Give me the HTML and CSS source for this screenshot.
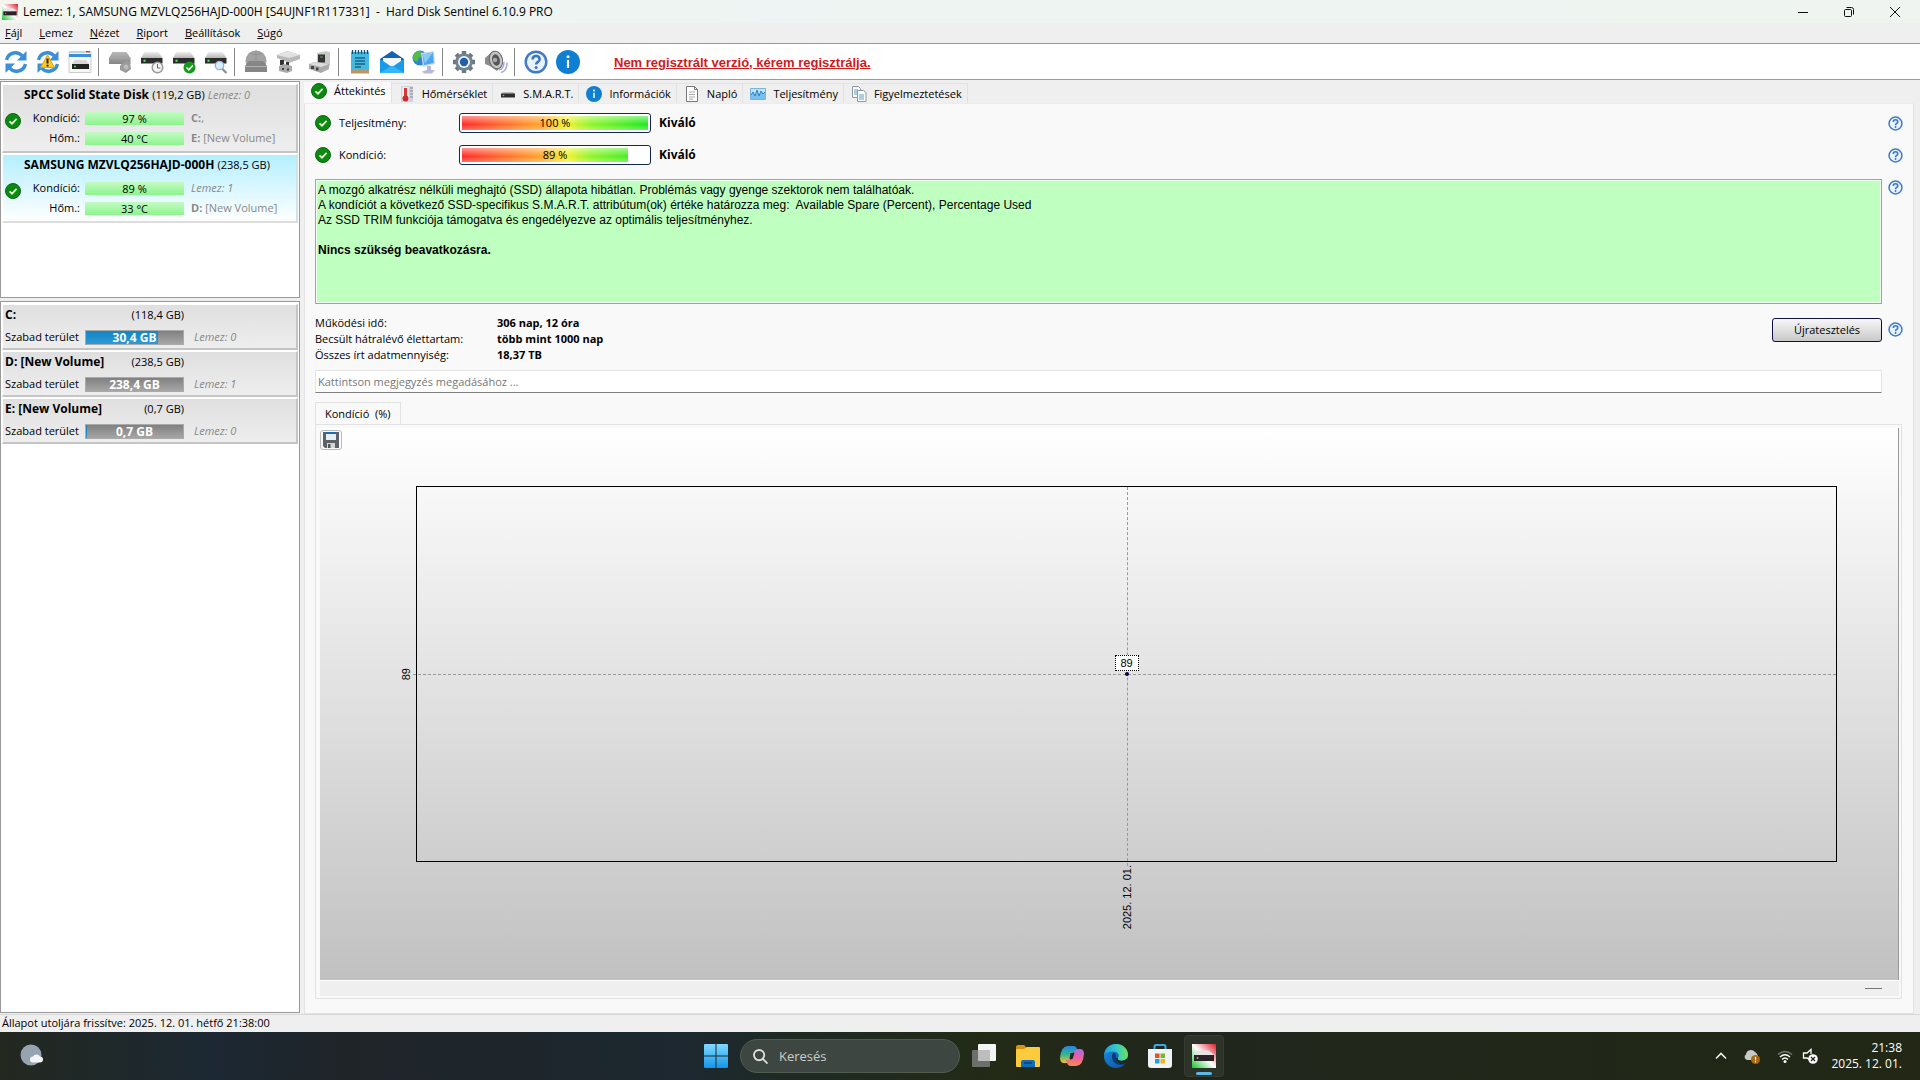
FILE: index.html
```html
<!DOCTYPE html>
<html lang="hu">
<head>
    <meta charset="UTF-8">
    <meta name="viewport" content="width=device-width, initial-scale=1.0">
    <title>Hard Disk Sentinel</title>
    <link rel="stylesheet" href="styles.css">
</head>
<body>
    <!-- shared icons -->
    <svg class="sprite" width="0" height="0" aria-hidden="true">
        <defs>
            <linearGradient id="disk-top" x1="0" y1="0" x2="0" y2="1"><stop offset="0" stop-color="#eee"/><stop offset="1" stop-color="#b5b5b5"/></linearGradient>
            <linearGradient id="blue" x1="0" y1="0" x2="0" y2="1"><stop offset="0" stop-color="#7fd9ff"/><stop offset="1" stop-color="#1296ea"/></linearGradient>
            <linearGradient id="app-bg" x1="0" y1="1" x2="1" y2="0"><stop offset="0" stop-color="#19c32f"/><stop offset=".5" stop-color="#fff"/><stop offset="1" stop-color="#e01a2a"/></linearGradient>
            <linearGradient id="grey-disk" x1="0" y1="0" x2="0" y2="1"><stop offset="0" stop-color="#b9b9b9"/><stop offset="1" stop-color="#858585"/></linearGradient>
            <linearGradient id="edge-a" x1="0" y1="0" x2="1" y2="0"><stop offset="0" stop-color="#1e9fe0"/><stop offset=".5" stop-color="#35c6c8"/><stop offset="1" stop-color="#6be25a"/></linearGradient>
            <linearGradient id="edge-b" x1="0" y1="0" x2="1" y2="1"><stop offset="0" stop-color="#1c8fe0"/><stop offset="1" stop-color="#0c4d9c"/></linearGradient>
            <linearGradient id="cop-a" x1="0" y1="0" x2="0" y2="1"><stop offset="0" stop-color="#2583e8"/><stop offset=".5" stop-color="#37b58c"/><stop offset="1" stop-color="#f3c12e"/></linearGradient>
            <linearGradient id="cop-b" x1="0" y1="0" x2="0" y2="1"><stop offset="0" stop-color="#a86bea"/><stop offset=".5" stop-color="#ea5fa2"/><stop offset="1" stop-color="#fb8a4e"/></linearGradient>
        </defs>
        <symbol id="i-ok" viewBox="0 0 16 16">
            <circle cx="8" cy="8" r="7.5" fill="#0c8a10" stroke="#076a0a"/>
            <path d="M4.5 8.3 7 10.7l4.6-4.8" fill="none" stroke="#e6f7d8" stroke-width="1.7"/>
        </symbol>
        <symbol id="i-help" viewBox="0 0 24 24">
            <circle cx="12" cy="12" r="10.3" fill="#e9f3ff" stroke="#3f7bca" stroke-width="2.4"/>
            <path d="M8.6 9.4c0-4.4 7-4.4 7 0 0 2.6-3.5 2.4-3.5 5.2" fill="none" stroke="#3b74c4" stroke-width="2.5"/>
            <circle cx="12.1" cy="17.6" r="1.5" fill="#3b74c4"/>
        </symbol>
        <symbol id="i-info" viewBox="0 0 24 24">
            <circle cx="12" cy="12" r="12" fill="#0f7fd2"/>
            <path d="M12 10v8" stroke="#fff" stroke-width="2.2"/>
            <circle cx="12" cy="6.7" r="1.5" fill="#fff"/>
        </symbol>
        <symbol id="i-refresh" viewBox="0 0 24 24">
            <path d="M2.500 10C4.500 1.800 14 .8 18.300 6" fill="none" stroke="#3b8fd8" stroke-width="3.400"/>
            <path d="M22.500 1v9.500h-9.500z" fill="#3b8fd8"/>
            <path d="M21.500 14c-2 8.200-11.500 9.200-15.800 4" fill="none" stroke="#3b8fd8" stroke-width="3.400"/>
            <path d="M1.500 23v-9.500H11z" fill="#3b8fd8"/>
        </symbol>
        <symbol id="i-disk" viewBox="0 0 24 24">
            <path d="M4.500 2h14L22.500 8H1z" fill="url(#disk-top)"/>
            <path d="M1 8h21.500v5.500H1z" fill="#2c2c2c"/>
            <circle cx="4.500" cy="10.700" r="1.200" fill="#43e04b"/>
        </symbol>
        <symbol id="i-app" viewBox="0 0 24 24">
            <path d="M0 0h24v24H0z" fill="url(#app-bg)"/>
            <path d="M5.500 6.500h11l5.500 4.500H2z" fill="#e4e4e4"/>
            <path d="M2 11h20v6H2z" fill="#2b2126"/>
            <circle cx="5.500" cy="14" r=".9" fill="#58df5a"/>
        </symbol>
    </svg>

    <div class="desktop">
        <header class="titlebar">
            <svg class="title-icon"><use href="#i-app"/></svg>
            <h1 class="title">Lemez: 1, SAMSUNG MZVLQ256HAJD-000H [S4UJNF1R117331] &nbsp;-&nbsp; Hard Disk Sentinel 6.10.9 PRO</h1>
            <button class="win-btn" aria-label="Kis méret"><svg viewBox="0 0 12 12"><path d="M1 6.500h10"/></svg></button>
            <button class="win-btn" aria-label="Előző méret"><svg viewBox="0 0 12 12"><rect x="1.500" y="3.500" width="7" height="7" rx="1"/><path d="M3.500 1.500h5q2 0 2 2v5"/></svg></button>
            <button class="win-btn" aria-label="Bezárás"><svg viewBox="0 0 12 12"><path d="m1 1 10 10M11 1 1 11"/></svg></button>
        </header>

        <nav class="menu">
            <button><u>F</u>ájl</button>
            <button><u>L</u>emez</button>
            <button><u>N</u>ézet</button>
            <button><u>R</u>iport</button>
            <button><u>B</u>eállítások</button>
            <button><u>S</u>úgó</button>
        </nav>

        <div class="toolbar">
            <button class="tool" aria-label="Frissítés"><svg><use href="#i-refresh"/></svg></button>
            <button class="tool" aria-label="Teljes frissítés">
                <svg viewBox="0 0 24 24"><use href="#i-refresh"/><path d="m11.500 5 7 12.500h-14z" fill="#ffc927" stroke="#e5a400" stroke-linejoin="round"/><path d="M11.500 8.500v5M11.500 14.700v1.800" stroke="#222" stroke-width="2"/></svg>
            </button>
            <button class="tool" aria-label="Ablak">
                <svg viewBox="0 0 24 24"><path d="M1 1.500h22v21H1z" fill="#f6f6f6" stroke="#ccc"/><path d="M1 1h17v2H1z" fill="#bcd6ee"/><path d="M18 1h4v1.500h-4z" fill="#d3412b"/><path d="M1 4h22v3H1z" fill="#3b8fd8"/><path d="M7 10h11l3 4H4z" fill="#d8d8d8"/><path d="M4 14h17v5H4z" fill="#222"/><circle cx="7" cy="16.500" r="1" fill="#4ee055"/></svg>
            </button>
            <span class="sep"></span>
            <button class="tool" aria-label="Leállítás" disabled>
                <svg viewBox="0 0 24 24"><path d="M4.500 2h14L22.500 8v6H1V8z" fill="url(#grey-disk)"/><path d="M1 8h21.500" stroke="#a8a8a8"/><path d="M12 16c3-4 6-6 10-4l1 7-5 4-6-3z" fill="#9b9b9b"/><circle cx="18" cy="17" r="2.500" fill="#bbb"/></svg>
            </button>
            <button class="tool" aria-label="Ütemezés">
                <svg viewBox="0 0 24 24"><use href="#i-disk"/><circle cx="17.500" cy="17.500" r="5.300" fill="#f4f4f4" stroke="#9a9a9a" stroke-width="1.500"/><path d="M17.500 14v4h3" fill="none" stroke="#666"/></svg>
            </button>
            <button class="tool" aria-label="Teszt">
                <svg viewBox="0 0 24 24"><use href="#i-disk"/><circle cx="17.500" cy="17.500" r="6" fill="#159a1b"/><path d="m14.500 17.500 2.300 2.300 4-4.300" fill="none" stroke="#fff" stroke-width="1.600"/></svg>
            </button>
            <button class="tool" aria-label="Keresés a lemezen">
                <svg viewBox="0 0 24 24"><use href="#i-disk"/><path d="m18 18.500 4.500 4.500" stroke="#8c8c94" stroke-width="2.200"/><circle cx="15.500" cy="15.500" r="4.200" fill="#d8efff" stroke="#9bb0c4" stroke-width="1.300"/></svg>
            </button>
            <span class="sep"></span>
            <button class="tool" aria-label="Hálózat" disabled>
                <svg viewBox="0 0 24 24"><circle cx="12" cy="11" r="10.500" fill="#a2a2a2"/><path d="M12 .5v10M6 3c4 2 8 2 12 0" stroke="#909090" fill="none"/><path d="M5 11h14l4 5v6H1v-6z" fill="#868686"/><path d="M1 16.500h22" stroke="#b2b2b2"/></svg>
            </button>
            <button class="tool" aria-label="Csatlakozó">
                <svg viewBox="0 0 24 24"><path d="m1 5 10-4 13 4v4L13 13 1 8z" fill="#b9b9b9"/><path d="m1 5 10-4 13 4-11 3z" fill="#e2e2e2"/><path d="M4 10h4v5H4zM10 12h3v4h-3z" fill="#333"/><path d="m3 16 5-2 8 2v5l-5 2-8-2z" fill="#aaa"/><path d="M6 18h2v2H6zM11 18.500h2v2h-2z" fill="#444"/></svg>
            </button>
            <button class="tool" aria-label="Adatkábel">
                <svg viewBox="0 0 24 24"><path d="m9 3 9-2 4 1v14l-9 2-4-3z" fill="#c9c9c9"/><path d="M10 4.500h7v8h-7z" fill="#333"/><path d="m1 14 5-2 15 2v5l-8 4-12-4z" fill="#aaa"/><path d="m1 14 5-2 15 2-8 3z" fill="#dcdcdc"/><path d="M3 16h3v3H3zM8 17.500h2.500v3H8z" fill="#444"/><path d="M12 7h3" stroke="#57a851"/></svg>
            </button>
            <span class="sep"></span>
            <button class="tool" aria-label="Riport">
                <svg viewBox="0 0 24 24"><path d="M3 2h18v19H3z" fill="#45b9e0"/><path d="M3 20h18v3.500H3z" fill="#b99767"/><path d="M4.500 0v4M7.500 0v4M10.500 0v4M13.500 0v4M16.500 0v4M19.500 0v4" stroke="#174c70" stroke-width="1.300"/><path d="M7 8h10M7 11h10M7 14h10M7 17h6" stroke="#176387" stroke-width="1.400"/></svg>
            </button>
            <button class="tool" aria-label="E-mail">
                <svg viewBox="0 0 24 24"><path d="M0 9 12 1l12 8v14H0z" fill="#1463b4"/><path d="M3 8h18v9H3z" fill="#f2f7fc"/><path d="m0 9 12 8L24 9v14H0z" fill="#179be8"/><path d="m0 23 12-7.500L24 23z" fill="#38b5f4"/></svg>
            </button>
            <button class="tool" aria-label="Távoli elérés">
                <svg viewBox="0 0 24 24"><circle cx="8" cy="8" r="7.500" fill="#2f85d4"/><path d="M3 3c5-4 8-1 7 2s-4 2-4 5-4 1-5-1 0-4 2-6z" fill="#54bb49"/><path d="m9 3 13-2 1 13-12 3z" fill="#cfd5f0"/><path d="m10.500 4.500 10.500-2 .7 10.500-9.700 2z" fill="#4aa6ee"/><path d="m10.500 4.500 10.500-2-8 11z" fill="#86cbf8"/><path d="M15 16h4v4h4l-3 3.500h-8l-2-2 5-1.500z" fill="#b7b9d6"/></svg>
            </button>
            <span class="sep"></span>
            <button class="tool" aria-label="Beállítások">
                <svg viewBox="0 0 24 24"><path d="M12 1v22M1 12h22M4.200 4.200l15.600 15.600M19.800 4.200 4.200 19.800" stroke="#6b7885" stroke-width="4.400"/><circle cx="12" cy="12" r="8.800" fill="#74818e"/><circle cx="12" cy="12" r="6" fill="#f2f6fa"/><circle cx="12" cy="12" r="4.200" fill="#1f5fae"/></svg>
            </button>
            <button class="tool" aria-label="Hang">
                <svg viewBox="0 0 24 24"><path d="m1 8 8-7 6 1 2 14-4 5-7-5-5-2z" fill="#8c8c8c"/><ellipse cx="12" cy="10" rx="6.500" ry="9" transform="rotate(-15 12 10)" fill="#c4c4c4" stroke="#666"/><ellipse cx="12" cy="10" rx="3.800" ry="5.800" transform="rotate(-15 12 10)" fill="#555"/><circle cx="11" cy="10" r="2.300" fill="#aaa"/><path d="M15 20c4-1 5-4 5-8M17 22.500c4-1 6-5 6-10" fill="none" stroke="#a9a9dc" stroke-width="1.500"/></svg>
            </button>
            <span class="sep"></span>
            <button class="tool" aria-label="Súgó"><svg><use href="#i-help"/></svg></button>
            <button class="tool" aria-label="Névjegy"><svg><use href="#i-info"/></svg></button>
            <a class="register" href="#">Nem regisztrált verzió, kérem regisztrálja.</a>
        </div>

        <div class="workspace">
            <aside class="sidebar">
                <div class="panel disks">
                    <article class="disk">
                        <h2 class="disk-name">SPCC Solid State Disk <span>(119,2 GB)</span> <em>Lemez: 0</em></h2>
                        <svg class="ok"><use href="#i-ok"/></svg>
                        <span class="disk-label">Kondíció:</span>
                        <span class="meter">97 %</span>
                        <span class="drive"><b>C:</b>,</span>
                        <span class="disk-label">Hőm.:</span>
                        <span class="meter">40 °C</span>
                        <span class="drive"><b>E:</b> [New Volume]</span>
                    </article>
                    <article class="disk selected">
                        <h2 class="disk-name">SAMSUNG MZVLQ256HAJD-000H <span>(238,5 GB)</span></h2>
                        <svg class="ok"><use href="#i-ok"/></svg>
                        <span class="disk-label">Kondíció:</span>
                        <span class="meter">89 %</span>
                        <span class="drive"><em>Lemez: 1</em></span>
                        <span class="disk-label">Hőm.:</span>
                        <span class="meter">33 °C</span>
                        <span class="drive"><b>D:</b> [New Volume]</span>
                    </article>
                </div>
                <div class="panel volumes">
                    <article class="volume">
                        <h3>C:</h3><span class="size">(118,4 GB)</span>
                        <span class="free">Szabad terület</span>
                        <span class="space"><i style="width: 74%"></i><b>30,4 GB</b></span>
                        <em>Lemez: 0</em>
                    </article>
                    <article class="volume">
                        <h3>D: [New Volume]</h3><span class="size">(238,5 GB)</span>
                        <span class="free">Szabad terület</span>
                        <span class="space"><i style="width: 0%"></i><b>238,4 GB</b></span>
                        <em>Lemez: 1</em>
                    </article>
                    <article class="volume">
                        <h3>E: [New Volume]</h3><span class="size">(0,7 GB)</span>
                        <span class="free">Szabad terület</span>
                        <span class="space"><i style="width: 1%"></i><b>0,7 GB</b></span>
                        <em>Lemez: 0</em>
                    </article>
                </div>
            </aside>

            <main class="main">
                <div class="tabs">
                    <button class="tab active"><svg><use href="#i-ok"/></svg>Áttekintés</button>
                    <button class="tab"><svg viewBox="0 0 16 16"><path d="M2 0h12v16H2z" fill="#cdd2dc"/><path d="M3 1h7v14H3z" fill="#e9ebf0"/><path d="M11 2h3M11 5h3M11 8h3M11 11h3" stroke="#889"/><path d="M6.500 2v9" stroke="#d43a35" stroke-width="3"/><circle cx="6.500" cy="12.500" r="3" fill="#c92c2c"/></svg>Hőmérséklet</button>
                    <button class="tab"><svg viewBox="0 0 16 16"><path d="M3 6h10l2 2H1z" fill="#bbb"/><path d="M1 7.500h14v4H1z" fill="#2e2e2e"/><circle cx="3.500" cy="9.500" r=".8" fill="#54d75a"/></svg>S.M.A.R.T.</button>
                    <button class="tab"><svg><use href="#i-info"/></svg>Információk</button>
                    <button class="tab"><svg viewBox="0 0 16 16"><path d="M2.500.5h8l3 3v12h-11z" fill="#fff" stroke="#777"/><path d="M10.500.5v3h3" fill="none" stroke="#777"/><path d="M5 6h6M5 8.500h6M5 11h6M5 13.200h4" fill="none" stroke="#aaa"/></svg>Napló</button>
                    <button class="tab"><svg viewBox="0 0 16 16"><path d="M.5 2.500h15v11H.5z" fill="#c2e3fa" stroke="#79b4dc"/><path d="m1 9 2-3 2 4 2-6 2 6 2-5 2 3 2-2v7H1z" fill="#79c0f0"/><path d="m1 9 2-3 2 4 2-6 2 6 2-5 2 3 2-2" fill="none" stroke="#2a83c9"/></svg>Teljesítmény</button>
                    <button class="tab"><svg viewBox="0 0 16 16"><path d="M1.500.5h6l2 2v9h-8z" fill="#fff" stroke="#8a98a5"/><path d="M3 4h4M3 6h4M3 8h3" stroke="#5a9bc9"/><path d="M6.500 4.500h6l2.500 2v9H6.500z" fill="#fff" stroke="#8a98a5"/><path d="M8 9h5M8 11h5M8 13h5" stroke="#5a9bc9"/></svg>Figyelmeztetések</button>
                </div>

                <div class="page">
                    <div class="overview">
                        <div class="status">
                            <svg class="ok"><use href="#i-ok"/></svg>
                            <span class="status-label">Teljesítmény:</span>
                            <span class="gauge"><i style="width: 100%"></i><span>100 %</span></span>
                            <b>Kiváló</b>
                        </div>
                        <button class="help" aria-label="Súgó: teljesítmény"><svg><use href="#i-help"/></svg></button>
                        <div class="status">
                            <svg class="ok"><use href="#i-ok"/></svg>
                            <span class="status-label">Kondíció:</span>
                            <span class="gauge"><i style="width: 89%"></i><span>89 %</span></span>
                            <b>Kiváló</b>
                        </div>
                        <button class="help" aria-label="Súgó: kondíció"><svg><use href="#i-help"/></svg></button>
                        <div class="report">
                            <p>A mozgó alkatrész nélküli meghajtó (SSD) állapota hibátlan. Problémás vagy gyenge szektorok nem találhatóak.<br>
                            A kondíciót a következő SSD-specifikus S.M.A.R.T. attribútum(ok) értéke határozza meg:&nbsp; Available Spare (Percent), Percentage Used<br>
                            Az SSD TRIM funkciója támogatva és engedélyezve az optimális teljesítményhez.</p>
                            <p><b>Nincs szükség beavatkozásra.</b></p>
                        </div>
                        <button class="help" aria-label="Súgó: állapot"><svg><use href="#i-help"/></svg></button>
                        <div class="facts">
                            <dl>
                                <dt>Működési idő:</dt><dd>306 nap, 12 óra</dd>
                                <dt>Becsült hátralévő élettartam:</dt><dd>több mint 1000 nap</dd>
                                <dt>Összes írt adatmennyiség:</dt><dd>18,37 TB</dd>
                            </dl>
                            <button class="retest">Újratesztelés</button>
                        </div>
                        <button class="help retest-help" aria-label="Súgó: újratesztelés"><svg><use href="#i-help"/></svg></button>
                        <input class="comment" type="text" aria-label="Megjegyzés" placeholder="Kattintson megjegyzés megadásához ...">
                    </div>

                    <div class="history">
                        <button class="history-tab">Kondíció &nbsp;(%)</button>
                        <div class="history-page">
                            <div class="chart">
                                <button class="save" aria-label="Mentés"><svg viewBox="0 0 16 16"><path d="M0 0h16v16H2l-2-2z" fill="#5c6268"/><path d="M3 0h10v8H3z" fill="#e9eef2"/><path d="M3 0h10v2H3z" fill="#1b6fb5"/><path d="M4 11h8v5H4z" fill="#d6d6d6"/><path d="M5 12h2.500v4H5z" fill="#555"/></svg></button>
                                <div class="plot">
                                    <span class="line-v"></span>
                                    <span class="line-h"></span>
                                    <span class="point"></span>
                                    <span class="value">89</span>
                                    <span class="axis-y">89</span>
                                    <span class="axis-x">2025. 12. 01.</span>
                                </div>
                            </div>
                            <div class="chart-foot"><span></span></div>
                        </div>
                    </div>
                </div>
            </main>
        </div>

        <footer class="statusbar">Állapot utoljára frissítve: 2025. 12. 01. hétfő 21:38:00</footer>

        <div class="taskbar">
            <button class="weather" aria-label="Időjárás">
                <svg viewBox="0 0 24 24"><circle cx="11" cy="11" r="10.500" fill="#98a3b1"/><path d="M13 18.500a3 3 0 0 1 0-6 4 4 0 0 1 7 0 3 3 0 0 1 0 6z" fill="#f3f5f8"/></svg>
            </button>
            <div class="apps">
                <button class="app" aria-label="Start"><svg viewBox="0 0 24 24"><path d="M1 0h10.500v11.500H0V1q0-1 1-1zM12.500 0H23q1 0 1 1v10.500H12.500zM0 12.500h11.500V24H1q-1 0-1-1zM12.500 12.500H24V23q0 1-1 1H12.500z" fill="url(#blue)"/></svg></button>
                <label class="search">
                    <svg viewBox="0 0 16 16"><circle cx="6.500" cy="6.500" r="5.500"/><path d="m10.500 10.500 5 5"/></svg>
                    <input type="search" placeholder="Keresés" aria-label="Keresés">
                </label>
                <button class="app" aria-label="Feladatnézet"><svg viewBox="0 0 24 24"><rect x="6" y="0" width="18" height="17" rx="1" fill="#f4f4f4"/><rect x="0" y="6" width="18" height="17" rx="1" fill="#6d6f6b"/><path d="M6 6h12v11H6z" fill="#bdbdbd"/></svg></button>
                <button class="app" aria-label="Fájlkezelő"><svg viewBox="0 0 24 24"><path d="M0 3q0-2 2-2h6l3 3h12v6H0z" fill="#d6930f"/><path d="M1 5h7l3-2h12q1 0 1 1v18q0 1-1 1H1q-1 0-1-1V6z" fill="#fccb3d"/><path d="M5 23v-5q0-2 2-2h10q2 0 2 2v5z" fill="#0f6cbd"/><path d="M8 19h8" stroke="#0a4b86" stroke-width="2"/></svg></button>
                <button class="app" aria-label="Copilot"><svg viewBox="0 0 24 24"><path d="M8 2h6q2 0 3 3l1 3h-3q-3 0-4 4l-1 4q-1 3-4 3H4q-4 0-4-5Q1 2 8 2z" fill="url(#cop-a)"/><path d="M16 22h-6q-2 0-3-3l-1-3h3q3 0 4-4l1-4q1-3 4-3h2q4 0 4 5-1 12-8 12z" fill="url(#cop-b)"/><path d="m10.500 9h4l-2 6h-3z" fill="#20281a"/></svg></button>
                <button class="app" aria-label="Edge"><svg viewBox="0 0 24 24"><circle cx="12" cy="12" r="12" fill="url(#edge-b)"/><path d="M.2 10.500C1 4 6 0 12 0c7 0 12 5 12 10.500 0 4-3 6-6.500 6-3 0-4.300-1.300-3.500-2.500 2-3 0-6.500-4.500-6.500C5 7.500 1 9 .2 10.500z" fill="url(#edge-a)"/><path d="M9.500 8.500C6 12 8 21 17 21q3 0 5-1.800c-5 1-11-1.200-9.800-6.200q.4-3-2.700-4.500z" fill="#093c7c"/><path d="M14 14c-1.500 3 5 4.500 9.500.5L24 18l-3 1.500c-5 1.500-9.500-1.500-8.800-5.500z" fill="#1f2818"/></svg></button>
                <button class="app" aria-label="Store"><svg viewBox="0 0 24 24"><path d="M6.500 6V2.500q0-1.500 1.500-1.500h8q1.500 0 1.500 1.500V6" fill="none" stroke="#38a9e4" stroke-width="2"/><path d="M0 5h24v16q0 3-3 3H3q-3 0-3-3z" fill="#f1f2f3"/><path d="M7 9.500h4.500V14H7z" fill="#e2512d"/><path d="M12.500 9.500H17V14h-4.500z" fill="#7cb728"/><path d="M7 15h4.500v4.500H7z" fill="#199fe2"/><path d="M12.500 15H17v4.500h-4.500z" fill="#f5b717"/></svg></button>
                <button class="app running" aria-label="Hard Disk Sentinel"><svg><use href="#i-app"/></svg></button>
            </div>
            <div class="tray">
                <svg class="chevron" viewBox="0 0 16 16"><path d="m3 10.500 5-5 5 5" fill="none" stroke="#eee" stroke-width="1.600"/></svg>
                <svg class="cloud" viewBox="0 0 16 16"><path d="M3 12a3 3 0 0 1-1-5.500A5 5 0 0 1 11 4q2 1 3 4v4z" fill="#c9c9c6"/><circle cx="11.500" cy="11.500" r="4.500" fill="#a9690f"/><path d="M11.500 8.800v3.500M11.500 13v1.200" stroke="#fff" stroke-width="1.200"/></svg>
                <svg class="wifi" viewBox="0 0 16 16"><path d="M1 6.500q7-6 14 0" stroke="#777" fill="none" stroke-width="1.400"/><path d="M3 9q5-4.500 10 0M5 11.500q3-3 6 0" stroke="#fff" fill="none" stroke-width="1.500"/><circle cx="8" cy="13.500" r="1.500" fill="#fff"/></svg>
                <svg class="sound" viewBox="0 0 16 16"><path d="M8 12 5 10H1.500V5H5l4-3.500V6" fill="none" stroke="#fff" stroke-width="1.300"/><circle cx="11" cy="11" r="4.800" fill="#fff"/><path d="m9 9 4 4M13 9l-4 4" stroke="#222" stroke-width="1.200"/></svg>
                <time class="clock">21:38<br>2025. 12. 01.</time>
            </div>
        </div>
    </div>
</body>
</html>
```
FILE: styles.css
```css
* {
    box-sizing: border-box;
}
body {
    margin: 0;
    font-family: "Open Sans", "Noto Sans", sans-serif;
    font-size: 11px;
    line-height: 16px;
    color: #000;
    background-color: #efefef;
}
button, input {
    font: inherit;
    color: inherit;
}
button {
    border: none;
    background: none;
    padding: 0;
}
h1, h2, h3, p, dl, dd {
    margin: 0;
    font-size: 12px;
}
svg {
    display: block;
    flex: none;
}
.desktop {
    display: flex;
    flex-direction: column;
    min-height: 100vh;
}

/* window frame */
.titlebar {
    display: flex;
    align-items: center;
    height: 23px;
    padding: 0 2px;
    background: linear-gradient(90deg, #f3f6ee, #edf4f3 40%, #eff4f0);
}
.title-icon {
    width: 16px;
    height: 16px;
    margin-right: 5px;
}
.title {
    flex: 1;
    font-weight: normal;
}
.win-btn {
    width: 46px;
    height: 23px;
}
.win-btn svg {
    width: 12px;
    height: 12px;
    margin: auto;
    fill: none;
    stroke: #111;
}
.menu {
    display: flex;
    gap: 17px;
    height: 21px;
    padding-left: 5px;
    border-bottom: 1px solid #999;
}
.toolbar {
    display: flex;
    align-items: center;
    height: 36px;
    background-color: #fff;
    border-bottom: 1px solid #999;
}
.tool {
    width: 32px;
    height: 32px;
}
.tool svg {
    width: 24px;
    height: 24px;
    margin: auto;
}
.sep {
    width: 8px;
    height: 28px;
    padding-left: 2px;
}
.sep::before {
    content: "";
    display: block;
    width: 1px;
    height: 28px;
    background-color: #888;
}
.register {
    margin-left: 30px;
    padding-top: 3px;
    font-family: "Liberation Sans", Arial, sans-serif;
    font-size: 13px;
    font-weight: bold;
    color: #d01a1a;
}

/* disk list */
.workspace {
    display: flex;
    flex: 1;
    padding-top: 1px;
}
.sidebar {
    display: flex;
    flex-direction: column;
    gap: 3px;
    width: 300px;
    padding-bottom: 1px;
}
.panel {
    padding: 2px 1px;
    background-color: #fff;
    border: 1px solid #999;
}
.disks {
    height: 217px;
}
.volumes {
    flex: 1;
}
.disk, .volume {
    display: grid;
    align-items: center;
    background: linear-gradient(#dfdfdf, #eee);
    border: 1px solid #fff;
    border-right: 2px solid #c4c4c4;
    border-bottom: 2px solid #c4c4c4;
    margin-bottom: 1px;
    white-space: nowrap;
}
.disk {
    grid-template-columns: 17px 53px 99px 1fr;
    grid-template-rows: 23px 20px 20px;
    column-gap: 5px;
    height: 69px;
    padding-left: 2px;
}
.disk.selected {
    background: linear-gradient(#b4efff, #fff);
    border-right-color: #cfe4ea;
    border-bottom-color: #ddd;
}
.disk-name {
    grid-column: 1 / -1;
    padding: 0 0 4px 19px;
}
.disk-name span, .disk-name em {
    font-size: 11px;
    font-weight: normal;
}
em {
    color: #888;
}
.disk .ok {
    grid-row: 2 / 4;
    align-self: start;
    width: 16px;
    height: 16px;
    margin-top: 5px;
}
.disk-label {
    text-align: right;
}
.meter {
    height: 13px;
    line-height: 13px;
    text-align: center;
    background: linear-gradient(#c4fbc4, #8cf48c);
}
.drive {
    padding-left: 2px;
    color: #888;
}
.volume {
    grid-template-columns: 75px 99px 1fr;
    grid-template-rows: 20px 24px;
    column-gap: 5px;
    height: 46px;
    padding-left: 2px;
}
.volume h3 {
    grid-column: 1;
}
.volume .size {
    text-align: right;
}
.volume .free {
    grid-column: 1;
}
.volume em {
    padding-left: 5px;
}
.space {
    display: grid;
    height: 15px;
    color: #fff;
    font-size: 12px;
    line-height: 13px;
    text-align: center;
    background: linear-gradient(#808080, #a6a6a6);
    border: 1px solid #aaa;
}
.space i, .space b {
    grid-area: 1 / 1;
}
.space i {
    background: linear-gradient(#1285c2, #2d9ad6);
}

/* main area */
.main {
    display: flex;
    flex: 1;
    flex-direction: column;
    min-width: 0;
    padding: 1px 6px 0 4px;
}
.tabs {
    display: flex;
    align-items: flex-end;
    height: 21px;
}
.tab {
    display: flex;
    align-items: center;
    gap: 7px;
    height: 20px;
    padding: 0 5px 0 7px;
    border: 1px solid #e2e2e2;
    border-left: none;
    border-bottom: none;
}
.tab svg {
    width: 16px;
    height: 16px;
}
.tab.active {
    height: 21px;
    padding-bottom: 3px;
    background-color: #f9f9f9;
    border-top: none;
}
.page {
    display: flex;
    flex: 1;
    flex-direction: column;
    padding: 7px 10px 14px;
    background-color: #f9f9f9;
    border: 1px solid #e2e2e2;
    border-top-color: #ececec;
}
.overview {
    display: grid;
    grid-template-columns: 1fr 15px;
    column-gap: 6px;
}
.status {
    display: flex;
    align-items: center;
    height: 32px;
    padding-bottom: 8px;
}
.status .ok {
    width: 16px;
    height: 16px;
}
.status-label {
    width: 120px;
    margin-left: 8px;
}
.gauge {
    display: grid;
    width: 192px;
    height: 20px;
    margin-right: 8px;
    padding: 2px;
    text-align: center;
    line-height: 14px;
    background-color: #fff;
    border: 1px solid #14284e;
    border-radius: 3px;
}
.gauge i, .gauge span {
    grid-area: 1 / 1;
}
.gauge i {
    background:
        linear-gradient(rgba(255, 255, 255, 0.5), rgba(255, 255, 255, 0) 60%, rgba(255, 255, 255, 0.3)),
        linear-gradient(90deg, #ff2a2a, #ff5a2a 30px, #ffa62a 80px, #f3f12a 105px, #8cf52a 130px, #1fe81f 186px);
}
.status b {
    font-size: 12px;
}
.help {
    height: 15px;
    margin-top: 5px;
}
.help svg {
    width: 15px;
    height: 15px;
}
.report {
    height: 125px;
    margin-top: 4px;
    padding: 3px 2px;
    font-family: "Liberation Sans", Arial, sans-serif;
    line-height: 15px;
    background-color: #bfffbf;
    border: 1px solid #a3a3a3;
    box-shadow: inset 0 0 0 1px #efffef;
}
.report p + p {
    margin-top: 15px;
}
.facts {
    display: flex;
    justify-content: space-between;
    align-items: flex-start;
    padding-top: 11px;
}
.facts dl {
    display: grid;
    grid-template-columns: 182px auto;
    font-size: 11px;
}
.facts dd {
    font-size: 11px;
    font-weight: bold;
}
.retest {
    width: 110px;
    height: 24px;
    margin-top: 3px;
    background: linear-gradient(#f8f8f8, #c8c8c8);
    border: 1px solid #10104a;
    border-radius: 3px;
}
.retest-help {
    margin-top: 18px;
}
.comment {
    height: 23px;
    margin-top: 7px;
    padding: 0 2px;
    background-color: #fff;
    border: 1px solid #e4e4e4;
    border-bottom-color: #808080;
}
.comment::placeholder {
    color: #777;
    opacity: 1;
}

/* history chart */
.history {
    display: flex;
    flex: 1;
    flex-direction: column;
    align-items: flex-start;
    margin: 9px 1px 0 0;
}
.history-tab {
    height: 22px;
    padding: 0 9px;
    border: 1px solid #e2e2e2;
    border-bottom: none;
}
.history-page {
    display: flex;
    flex: 1;
    flex-direction: column;
    align-self: stretch;
    padding: 3px 2px 2px 4px;
    border: 1px solid #e2e2e2;
}
.chart {
    display: flex;
    flex: 1;
    flex-direction: column;
    padding: 2px 61px 118px 96px;
    background: linear-gradient(#fff, #c1c1c1);
    border-right: 1px solid #999;
}
.save {
    width: 22px;
    height: 20px;
    margin-left: -96px;
    background-color: #fafafa;
    border: 1px solid #bbb;
    border-radius: 3px;
}
.save svg {
    width: 16px;
    height: 16px;
    margin: auto;
}
.plot {
    position: relative;
    flex: 1;
    margin-top: 36px;
    border: 1px solid #000;
}
/* chart marks lie over the plot at the data point */
.line-v, .line-h, .point, .value, .axis-y, .axis-x {
    position: absolute;
}
.line-v {
    top: 0;
    bottom: -5px;
    left: 50%;
    border-left: 1px dashed #999;
}
.line-h {
    top: 50%;
    left: -4px;
    right: 0;
    border-top: 1px dashed #999;
}
.point {
    top: 50%;
    left: 50%;
    width: 4px;
    height: 4px;
    margin: -2px;
    border-radius: 2px;
    background-color: #00004a;
}
.value {
    bottom: 50%;
    left: 50%;
    width: 24px;
    height: 16px;
    margin: 0 -12px 3px;
    text-align: center;
    line-height: 14px;
    background-color: #fff;
    border: 1px dotted #000;
}
.value, .axis-y, .axis-x {
    font-family: "Liberation Sans", Arial, sans-serif;
    font-size: 11px;
}
.axis-y, .axis-x {
    writing-mode: vertical-rl;
    transform: rotate(180deg);
    white-space: nowrap;
}
.axis-y {
    top: 50%;
    right: 100%;
    margin: -6px 3px;
}
.axis-x {
    top: 100%;
    left: 50%;
    margin: 4px -8px;
}
.chart-foot {
    display: flex;
    justify-content: flex-end;
    align-items: center;
    height: 16px;
    padding-right: 17px;
    background-color: #efefef;
    border-top: 1px solid #fff;
}
.chart-foot span {
    width: 17px;
    height: 1px;
    background-color: #777;
}
.statusbar {
    height: 18px;
    padding-left: 2px;
    border-top: 1px solid #d8d8d8;
}

/* taskbar */
.taskbar {
    display: grid;
    grid-template-columns: 1fr auto 1fr;
    align-items: center;
    height: 48px;
    color: #fff;
    background: linear-gradient(90deg, #232820, #1c2833 11%, #1f2428 18%, #1d2830 36%, #1e2a24 41%, #232a16 52%, #20261c 62%, #222815);
}
.weather {
    width: 24px;
    margin-left: 20px;
}
.weather svg {
    width: 24px;
    height: 24px;
}
.apps {
    display: flex;
    align-items: center;
    height: 48px;
}
.app {
    width: 44px;
    height: 44px;
}
.app svg {
    width: 24px;
    height: 24px;
    margin: auto;
}
.running {
    width: 40px;
    height: 42px;
    margin: 2px;
    padding-top: 6px;
    background-color: #2d3328;
    border: 1px solid #383d32;
    border-radius: 4px;
}
.running::after {
    content: "";
    display: block;
    width: 16px;
    height: 3px;
    margin: 4px auto 0;
    border-radius: 2px;
    background-color: #5bb9e8;
}
.search {
    display: flex;
    align-items: center;
    gap: 11px;
    width: 220px;
    height: 34px;
    margin: 0 2px;
    padding: 0 12px;
    background-color: #3d4641;
    border: 1px solid #525a52;
    border-radius: 17px;
}
.search svg {
    width: 15px;
    height: 15px;
    fill: none;
    stroke: #ddd;
    stroke-width: 2;
}
.search input {
    flex: 1;
    min-width: 0;
    padding: 0;
    font-size: 13px;
    background: none;
    border: none;
}
.search input::placeholder {
    color: #ccc;
    opacity: 1;
}
.tray {
    display: flex;
    justify-content: flex-end;
    align-items: center;
    gap: 9px;
    padding-right: 18px;
}
.tray svg {
    width: 16px;
    height: 16px;
}
.tray .chevron {
    margin-right: 6px;
}
.tray .cloud {
    margin-right: 8px;
}
.tray .sound {
    margin-right: 4px;
}
.clock {
    font-size: 12px;
    text-align: right;
}
```
